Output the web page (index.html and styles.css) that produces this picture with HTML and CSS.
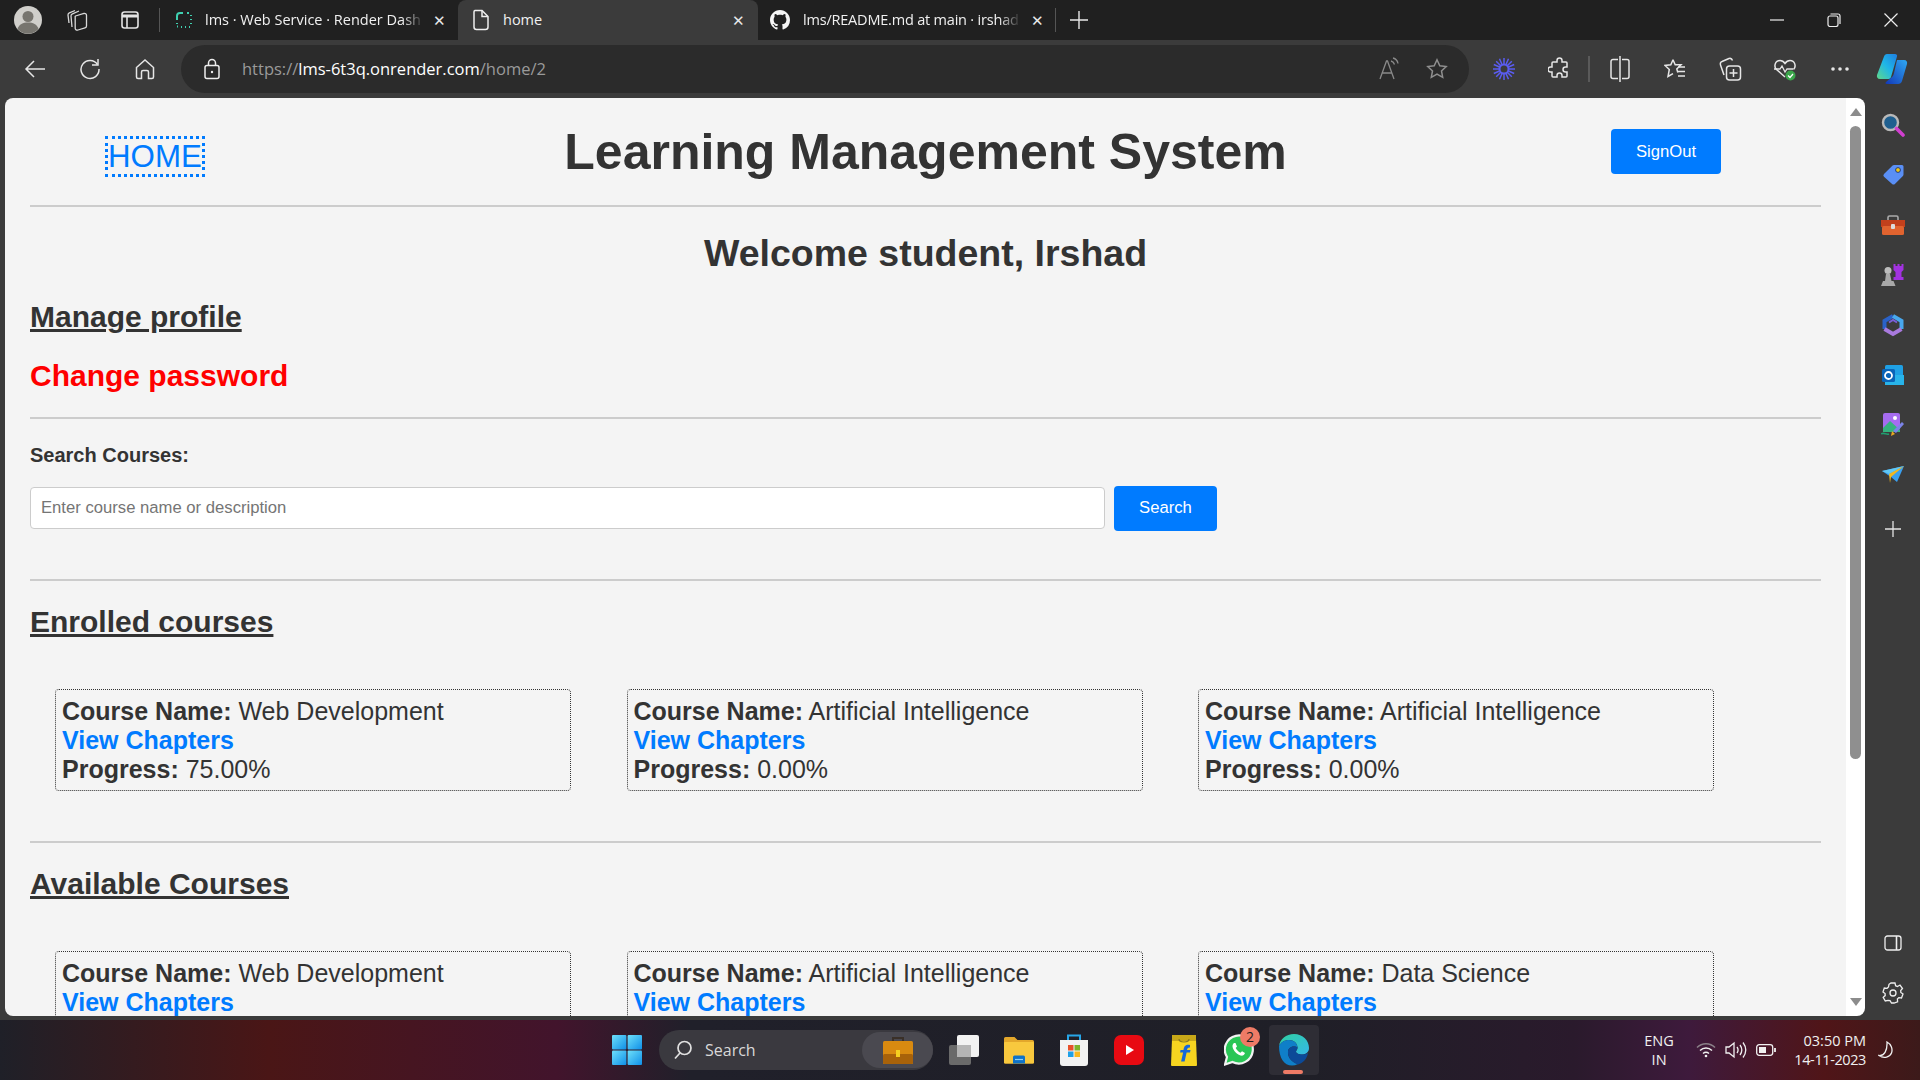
FILE: index.html
```html
<!DOCTYPE html>
<html lang="en">
  <head>
    <meta charset="UTF-8" />
    <meta name="viewport" content="width=device-width, initial-scale=1.0" />
    <title>home</title>
    <link rel="stylesheet" href="styles.css">
  </head>
  <body>
    <div class="tab-strip">
      <div class="strip-btn avatar-btn">
        <svg width="28" height="28" viewBox="0 0 28 28"><circle cx="14" cy="14" r="14" fill="#d0cfcb"/><circle cx="14" cy="10.500" r="5.500" fill="#77756f"/><path d="M3.500 23c1.500-5 5.500-6.500 10.500-6.500S23 18 24.500 23a14 14 0 0 1-21 0z" fill="#77756f"/></svg>
      </div>
      <div class="strip-btn">
        <svg width="24" height="24" viewBox="0 0 24 24" fill="none" stroke="#d8d8d8" stroke-width="1.300"><path d="m10.500 8 8.500-2.500a2 2 0 0 1 2.500 1.800V18a2 2 0 0 1-1.500 1.900L13 22a2 2 0 0 1-2.800-1.800V9.500a1.500 1.500 0 0 1 .3-1.500z"/><path d="M7 19 6 8c0-1 .5-1.800 1.500-2.200L14 3"/><path d="M4 15 3 7c0-1 .5-1.700 1.400-2.100L10 2.500"/></svg>
      </div>
      <div class="strip-btn">
        <svg width="20" height="20" viewBox="0 0 20 20" fill="none" stroke="#e4e4e4" stroke-width="1.600"><rect x="2" y="2" width="16" height="16" rx="2.500"/><path d="M2 6h16" stroke-width="3"/><path d="M7 6v12"/></svg>
      </div>
      <span class="strip-sep"></span>
      <div class="tab tab-first">
        <svg class="tab-icon" width="16" height="16" viewBox="0 0 16 16" fill="none" stroke="#3fd0b0" stroke-width="2"><path d="M1 8V4a3 3 0 0 1 3-3h3"/><path d="M1 11v1M1 14.500h1M5 15h1M9 15h1M13 15h1M15 11v1M15 7v1M15 3v1M11 1h2"/></svg>
        <span class="tab-title">lms · Web Service · Render Dash</span>
        <span class="tab-close">&#10005;</span>
      </div>
      <div class="tab tab-active">
        <svg class="tab-icon" width="18" height="22" viewBox="0 0 18 22" fill="none" stroke="#eee" stroke-width="1.500"><path d="M3 1.500h7l6 6V18a2.500 2.500 0 0 1-2.500 2.500h-9A2.500 2.500 0 0 1 2 18V3a1.500 1.500 0 0 1 1-1.500z"/><path d="M10 1.500V7.500h6"/></svg>
        <span class="tab-title">home</span>
        <span class="tab-close">&#10005;</span>
      </div>
      <div class="tab tab-github">
        <svg class="tab-icon" width="20" height="20" viewBox="0 0 16 16" fill="#f5f5f5"><path d="M8 0C3.580 0 0 3.580 0 8c0 3.540 2.290 6.530 5.470 7.590.4.070.55-.17.55-.38 0-.19-.01-.82-.01-1.490-2.010.37-2.530-.49-2.690-.94-.09-.23-.48-.94-.82-1.130-.28-.15-.68-.52-.01-.53.63-.01 1.080.58 1.230.82.720 1.210 1.870.87 2.330.66.070-.52.280-.87.510-1.070-1.780-.2-3.640-.89-3.640-3.950 0-.87.310-1.590.820-2.150-.08-.2-.36-1.020.080-2.120 0 0 .67-.21 2.200.82.640-.18 1.320-.27 2-.27s1.360.09 2 .27c1.530-1.040 2.200-.82 2.200-.82.440 1.100.160 1.920.080 2.120.510.560.820 1.270.820 2.150 0 3.070-1.870 3.750-3.650 3.950.290.250.540.730.540 1.480 0 1.070-.01 1.930-.01 2.200 0 .21.150.460.550.380A8.010 8.010 0 0 0 16 8c0-4.420-3.580-8-8-8z"/></svg>
        <span class="tab-title">lms/README.md at main · irshad</span>
        <span class="tab-close">&#10005;</span>
      </div>
      <span class="strip-sep strip-sep-end"></span>
      <div class="new-tab">
        <svg width="18" height="18" viewBox="0 0 18 18" stroke="#e8e8e8" stroke-width="1.400"><path d="M9 0v18M0 9h18"/></svg>
      </div>
      <div class="window-controls">
        <svg width="14" height="14" viewBox="0 0 14 14" stroke="#eee" stroke-width="1.200"><path d="M0 7h14"/></svg>
        <svg width="14" height="14" viewBox="0 0 14 14" fill="none" stroke="#eee" stroke-width="1.200"><rect x="1" y="3" width="10" height="10.500" rx="2"/><path d="M3.500 1h7.500a2 2 0 0 1 2 2v8"/></svg>
        <svg width="14" height="14" viewBox="0 0 14 14" stroke="#eee" stroke-width="1.200"><path d="M0.500 0.500l13 13M13.500 0.500l-13 13"/></svg>
      </div>
    </div>

    <div class="toolbar">
      <div class="tool-btn">
        <svg width="22" height="20" viewBox="0 0 22 20" fill="none" stroke="#e6e6e6" stroke-width="1.500"><path d="M21 10H2M10 2l-8 8 8 8"/></svg>
      </div>
      <div class="tool-btn">
        <svg width="22" height="22" viewBox="0 0 22 22" fill="none" stroke="#e6e6e6" stroke-width="1.500"><path d="M18.500 6.500A9 9 0 1 0 20 11"/><path d="M19 1v6h-6"/></svg>
      </div>
      <div class="tool-btn">
        <svg width="20" height="22" viewBox="0 0 20 22" fill="none" stroke="#e6e6e6" stroke-width="1.500"><path d="M1.500 9.500 10 2l8.500 7.500V19a1.500 1.500 0 0 1-1.500 1.500h-3.500V14a1.500 1.500 0 0 0-1.500-1.500H8A1.500 1.500 0 0 0 6.500 14v6.500H3A1.500 1.500 0 0 1 1.500 19z"/></svg>
      </div>
      <div class="address-bar">
        <svg class="lock" width="16" height="22" viewBox="0 0 16 22" fill="none" stroke="#eee" stroke-width="1.500"><rect x="1" y="7.500" width="14" height="13" rx="2"/><path d="M4.500 7.500V5a3.500 3.500 0 0 1 7 0v2.500"/><circle cx="8" cy="14" r="1.200" fill="#eee" stroke="none"/></svg>
        <span class="url"><span class="url-dim">https://</span>lms-6t3q.onrender.com<span class="url-dim">/home/2</span></span>
        <svg class="addr-icon read-icon" width="24" height="24" viewBox="0 0 24 24" fill="none" stroke="#8a8a8a" stroke-width="1.300"><path d="M2 22 8.500 4h1L16 22M4.500 16h9"/><path d="M13 4c2 .5 3 1.500 3.500 3.500M15 1c3 .8 4.500 2.500 5 5.500"/></svg>
        <svg class="addr-icon" width="22" height="22" viewBox="0 0 22 22" fill="none" stroke="#8f8f8f" stroke-width="1.500"><path d="m11 1.800 2.800 6 6.400.8-4.700 4.400 1.200 6.400-5.700-3.200-5.700 3.200 1.200-6.400L1.800 8.600l6.400-.8z"/></svg>
      </div>
      <div class="tool-btn">
        <svg width="22" height="22" viewBox="0 0 22 22" stroke="#5a5cf0" stroke-width="1.500"><path d="M11 0v22M0 11h22M3.200 3.200l15.600 15.600M18.800 3.200 3.200 18.800M6.500 .8l9 20.400M15.500 .8l-9 20.400M.8 6.500l20.400 9M.8 15.500l20.400-9"/><circle cx="11" cy="11" r="4.500" fill="#3b3b3b" stroke-width="2"/></svg>
      </div>
      <div class="tool-btn">
        <svg width="22" height="24" viewBox="0 0 22 24" fill="none" stroke="#e6e6e6" stroke-width="1.500"><path d="M9 3.500a2.500 2.500 0 0 1 5 0V5h4a1 1 0 0 1 1 1v4h-1.500a2.500 2.500 0 0 0 0 5H19v4a1 1 0 0 1-1 1h-4v-1.500a2.500 2.500 0 0 0-5 0V20H5a1 1 0 0 1-1-1v-4H2.500a2.500 2.500 0 0 1 0-5H4V6a1 1 0 0 1 1-1h4z"/></svg>
      </div>
      <span class="tool-sep"></span>
      <div class="tool-btn">
        <svg width="20" height="26" viewBox="0 0 20 26" fill="none" stroke="#e6e6e6" stroke-width="1.500"><path d="M8 3.500H3A2 2 0 0 0 1 5.500v15a2 2 0 0 0 2 2h5M12 3.500h5a2 2 0 0 1 2 2v15a2 2 0 0 1-2 2h-5"/><path d="M10 0v26"/></svg>
      </div>
      <div class="tool-btn">
        <svg width="22" height="22" viewBox="0 0 22 22" fill="none" stroke="#e6e6e6" stroke-width="1.500"><path d="m9 1.800 2.200 5H17L12.800 11l1 3.500M9 1.800l-2.200 5-5.800.7 4.300 4L4 18.500l5-2.800"/><path d="M14 9h7M14 13.500h7M14 18h7"/></svg>
      </div>
      <div class="tool-btn">
        <svg width="24" height="26" viewBox="0 0 24 26" fill="none" stroke="#e6e6e6" stroke-width="1.500"><path d="M6 19 2.500 9C2 7.500 2.500 6 4 5.500l7-3c1.500-.5 3 .5 3.500 2"/><rect x="8.500" y="10" width="14" height="14" rx="3"/><path d="M15.500 13v8M11.500 17h8"/></svg>
      </div>
      <div class="tool-btn">
        <svg width="24" height="24" viewBox="0 0 24 24"><path d="M12 20 3.500 12.500C.5 9.500 2 3.500 7 3.500c2.500 0 4 1.500 5 3 1-1.500 2.500-3 5-3 5 0 6.500 6 3.500 9" fill="none" stroke="#e6e6e6" stroke-width="1.500"/><path d="M1 12h6l2-3 3 6 2-3h6" fill="none" stroke="#e6e6e6" stroke-width="1.300"/><circle cx="17.500" cy="18.500" r="5" fill="#3aa54a"/><path d="m15 18.500 2 2 3-3.500" fill="none" stroke="#fff" stroke-width="1.200"/></svg>
      </div>
      <div class="tool-btn">
        <svg width="18" height="4" viewBox="0 0 18 4" fill="#e6e6e6"><circle cx="2" cy="2" r="1.800"/><circle cx="9" cy="2" r="1.800"/><circle cx="16" cy="2" r="1.800"/></svg>
      </div>
      <div class="tool-btn tool-copilot">
        <svg width="32" height="32" viewBox="0 0 32 32"><defs><linearGradient id="copA" x1="0" y1="1" x2="1" y2="0"><stop offset="0" stop-color="#5fd88a"/><stop offset=".5" stop-color="#1fb6e8"/><stop offset="1" stop-color="#1f7de0"/></linearGradient><linearGradient id="copB" x1="0" y1="1" x2="1" y2="0"><stop offset="0" stop-color="#1238b8"/><stop offset="1" stop-color="#2fa8f2"/></linearGradient></defs><path d="M11 1h8c1.500 0 2.500 1 2 2.500L15 24c-.5 1.500-1.500 2-3 2H4c-2.500 0-3.500-2-3-4L8 3.500C8.500 2 9.500 1 11 1z" fill="url(#copA)"/><path d="M21 7h7c2.500 0 3.500 2 3 4l-5 17c-.5 2-2 3-4 3H11c-1.500 0-2-1-1-2l6-5c1-1 1.500-2 2-4z" fill="url(#copB)"/></svg>
      </div>
    </div>

    <div class="window-body">
      <main class="page">
        <header class="site-header">
          <a class="home-link">HOME</a>
          <h1 class="site-title">Learning Management System</h1>
          <button class="btn signout-btn">SignOut</button>
        </header>
        <hr />
        <h2 class="welcome">Welcome student, Irshad</h2>
        <h3 class="section-title profile-link">Manage profile</h3>
        <h3 class="password-link">Change password</h3>
        <hr class="after-profile" />
        <form class="search-form">
          <label class="search-label" for="courseSearch">Search Courses:</label>
          <div class="search-row">
            <input type="text" id="courseSearch" class="search-input" placeholder="Enter course name or description" />
            <button type="button" class="btn search-btn">Search</button>
          </div>
        </form>
        <hr />
        <h3 class="section-title">Enrolled courses</h3>
        <div class="course-grid">
          <div class="course-card">
            <div><b>Course Name:</b> Web Development</div>
            <a class="chapters-link">View Chapters</a>
            <div><b>Progress:</b> 75.00%</div>
          </div>
          <div class="course-card">
            <div><b>Course Name:</b> Artificial Intelligence</div>
            <a class="chapters-link">View Chapters</a>
            <div><b>Progress:</b> 0.00%</div>
          </div>
          <div class="course-card">
            <div><b>Course Name:</b> Artificial Intelligence</div>
            <a class="chapters-link">View Chapters</a>
            <div><b>Progress:</b> 0.00%</div>
          </div>
        </div>
        <hr />
        <h3 class="section-title">Available Courses</h3>
        <div class="course-grid">
          <div class="course-card">
            <div><b>Course Name:</b> Web Development</div>
            <a class="chapters-link">View Chapters</a>
          </div>
          <div class="course-card">
            <div><b>Course Name:</b> Artificial Intelligence</div>
            <a class="chapters-link">View Chapters</a>
          </div>
          <div class="course-card">
            <div><b>Course Name:</b> Data Science</div>
            <a class="chapters-link">View Chapters</a>
          </div>
        </div>
      </main>

      <div class="scrollbar">
        <span class="arrow-up"></span>
        <span class="scroll-thumb"></span>
        <span class="arrow-down"></span>
      </div>

      <aside class="sidebar">
        <svg class="side-icon" width="24" height="24" viewBox="0 0 24 24"><circle cx="9.500" cy="9.500" r="7.500" fill="#1f5f8f" stroke="#b9b9b9" stroke-width="2.400"/><path d="m15.500 15.500 6.500 6.500" stroke="#d13fd0" stroke-width="3.600" stroke-linecap="round"/></svg>
        <svg class="side-icon" width="22" height="22" viewBox="0 0 22 22"><path d="M12 1h8a1.500 1.500 0 0 1 1.500 1.500v8a2 2 0 0 1-.6 1.400l-8 8a2 2 0 0 1-2.800 0L2 12.800a2 2 0 0 1 0-2.800l8.600-8.400A2 2 0 0 1 12 1z" fill="#5a8ff5"/><circle cx="16" cy="6" r="2.400" fill="#f2c811" stroke="#1f3a80"/></svg>
        <svg class="side-icon" width="24" height="20" viewBox="0 0 24 20"><path d="M7 5V2.500A1.500 1.500 0 0 1 8.500 1h7A1.500 1.500 0 0 1 17 2.500V5" fill="none" stroke="#aaa" stroke-width="1.600"/><rect y="5" width="24" height="7" fill="#c2401c"/><rect x="1" y="11" width="22" height="9" rx="1.500" fill="#e0632f"/><rect x="10" y="9" width="4" height="5" rx="1" fill="#ddd"/></svg>
        <svg class="side-icon" width="24" height="24" viewBox="0 0 24 24"><path d="M13.500 1h2v2h2V1h2v2h2V1h2v6l-2 2v5h2v3H13.500v-3h2V9l-2-2z" fill="#a232e0" transform="translate(-1 0)"/><circle cx="7" cy="7.500" r="3.500" fill="#bdbdbd"/><path d="M5 11h4l1.500 7h2l2 5H0l2-5h2z" fill="#a8a8a8"/></svg>
        <svg class="side-icon" width="22" height="24" viewBox="0 0 22 24" fill="none" stroke-width="4"><path d="M2.500 16V8L11 3" stroke="#2a62c8"/><path d="M11 3l8.500 5v8" stroke="#48a8ee"/><path d="M19.500 16 11 21l-8.500-5" stroke="#a97ade"/><path d="M7 9.500 11 7l4 2.500" stroke="#7a5fd8" stroke-width="2"/></svg>
        <svg class="side-icon" width="22" height="22" viewBox="0 0 22 22"><rect x="3" y="1" width="18" height="20" rx="1.500" fill="#1fa0e4"/><path d="M3 11h19v10H3z" fill="#28b4ea"/><rect y="5" width="13" height="13" rx="1.500" fill="#0a64b8"/><circle cx="6.500" cy="11.500" r="3.500" fill="none" stroke="#fff" stroke-width="1.800"/></svg>
        <svg class="side-icon" width="24" height="24" viewBox="0 0 24 24"><rect x="2" y="0" width="17" height="17" rx="2" fill="#a66cf0"/><path d="M2 15 9 8l10 9v2H2z" fill="#35b37e"/><circle cx="14" cy="5" r="2" fill="#fff"/><path d="m12 18 9-9 2 2-8 9z" fill="#7b83e8"/><path d="m11 18 3 3-4 2z" fill="#e8a820"/><path d="M0 21c3-2 5 1 8 0" fill="none" stroke="#1fa070" stroke-width="1.500"/></svg>
        <svg class="side-icon" width="22" height="18" viewBox="0 0 22 18"><path d="M0 5 22 0 15 16 9 11z" fill="#3aa0f0"/><path d="M0 5 22 0 7 8z" fill="#60c8f5"/><path d="M7 8 22 0 9 11l-1 6z" fill="#f2b820"/></svg>
        <svg class="side-icon side-plus" width="16" height="16" viewBox="0 0 16 16" stroke="#e4e4e4" stroke-width="1.300"><path d="M8 0v16M0 8h16"/></svg>
        <span class="side-rule"></span>
        <svg class="side-icon" width="18" height="16" viewBox="0 0 18 16" fill="none" stroke="#eee" stroke-width="1.300"><rect x="1" y="1" width="16" height="14" rx="2.500"/><path d="M12.500 1v14" stroke-width="1.600"/></svg>
        <svg class="side-icon" width="22" height="22" viewBox="0 0 22 22" fill="none" stroke="#eee" stroke-width="1.300"><path d="M9 1h4l.6 2.700 1.800.8L18 3l2.500 3.500-1.800 2 .1 2 2.200 1.500-1.500 4-2.700-.4-1.400 1.400.2 2.800L12 21h-2.500l-1.500-2.300-2-.3L3.300 19 1.200 15.300l2-1.700-.1-2L1 10l1.300-4 2.800.3L6.500 5 7 2.300z"/><circle cx="11" cy="11" r="3"/></svg>
      </aside>
    </div>

    <footer class="taskbar">
      <svg class="win-logo" width="30" height="30" viewBox="0 0 30 30"><defs><linearGradient id="winA" x1="0" y1="0" x2="1" y2="1"><stop offset="0" stop-color="#6ee0fa"/><stop offset="1" stop-color="#0f8fe8"/></linearGradient></defs><rect width="14.400" height="14.400" rx="1" fill="url(#winA)"/><rect x="15.600" width="14.400" height="14.400" rx="1" fill="url(#winA)"/><rect y="15.600" width="14.400" height="14.400" rx="1" fill="url(#winA)"/><rect x="15.600" y="15.600" width="14.400" height="14.400" rx="1" fill="url(#winA)"/></svg>
      <div class="task-search">
        <svg width="20" height="20" viewBox="0 0 20 20" fill="none" stroke="#e0e0e0" stroke-width="1.700"><circle cx="11.500" cy="8" r="6.500"/><path d="M7 13l-5 5.500"/></svg>
        <span class="task-search-text">Search</span>
        <span class="task-search-pic">
          <svg width="30" height="28" viewBox="0 0 30 28"><path d="M10 6V2h10v4" fill="none" stroke="#3a3028" stroke-width="2"/><rect y="5" width="30" height="23" rx="1.500" fill="#d98a10"/><rect y="18" width="30" height="10" rx="1.500" fill="#a8620a"/><rect x="13" y="14" width="4" height="7" fill="#f5d020"/></svg>
        </span>
      </div>
      <div class="task-apps">
        <span class="task-app"><svg width="30" height="30" viewBox="0 0 30 30"><rect x="0" y="10" width="22" height="20" rx="2" fill="#6a6a6a"/><rect x="8" y="0" width="22" height="22" rx="2" fill="#f2f2f2"/><rect x="8" y="10" width="14" height="12" fill="#b5b5b5"/></svg></span>
        <span class="task-app"><svg width="30" height="28" viewBox="0 0 30 28"><path d="M0 2.500A1.500 1.500 0 0 1 1.500 1h9l3 3h15A1.500 1.500 0 0 1 30 5.500V26a1.500 1.500 0 0 1-1.500 1.500h-27A1.500 1.500 0 0 1 0 26z" fill="#e3a72b"/><rect y="6" width="30" height="21.500" rx="1" fill="#f8c83e"/><path d="M9 27.500V21a1.500 1.500 0 0 1 1.500-1.500h9A1.500 1.500 0 0 1 21 21v6.500z" fill="#0f72c8"/><path d="M11 23.500h8" stroke="#8fd0f5" stroke-width="1.200"/></svg></span>
        <span class="task-app"><svg width="28" height="32" viewBox="0 0 28 32"><path d="M8 8V1.500h12V8" fill="none" stroke="#27a6e8" stroke-width="2"/><path d="M0 6h28v23a3 3 0 0 1-3 3H3a3 3 0 0 1-3-3z" fill="#f2f2f2"/><rect x="8" y="11" width="5.500" height="5.500" fill="#e8502a"/><rect x="14.500" y="11" width="5.500" height="5.500" fill="#7db32a"/><rect x="8" y="17.500" width="5.500" height="5.500" fill="#1fa0e8"/><rect x="14.500" y="17.500" width="5.500" height="5.500" fill="#f8b820"/></svg></span>
        <span class="task-app"><svg width="30" height="30" viewBox="0 0 30 30"><rect width="30" height="30" rx="7" fill="#e80a12"/><path d="m12 10 8 5-8 5z" fill="#fff"/></svg></span>
        <span class="task-app"><svg width="26" height="32" viewBox="0 0 26 32"><path d="M1 5h24l1 26a1 1 0 0 1-1 1H1a1 1 0 0 1-1-1z" fill="#f6d420"/><path d="M1 1h24v6H1z" fill="#c8a818"/><path d="M8 5c0 4 10 4 10 0" fill="none" stroke="#8a7a20" stroke-width="1.200"/><path d="M19 11c-5-1-6 2-6.500 5H9.500l-.4 2.500h3l-2 9h3.500l2-9h3.400l.5-2.500H16c.3-2 1-2.800 3-2.500z" fill="#1668d8"/></svg></span>
        <span class="task-app task-whatsapp">
          <svg width="30" height="32" viewBox="0 0 30 32"><path d="M1 30.500 3 23A14 14 0 1 1 8.500 28z" fill="#29c656" stroke="#f2f2f2" stroke-width="2.200"/><path d="M10 9c-1.500 1-2 3-1 5.500 1.500 3.500 4.500 6 7.500 7 2 .6 4-.5 4.500-2.500l-3-1.800-1.500 1.500c-2-.8-3.700-2.500-4.800-4.700l1.300-1.500L11.500 9z" fill="#fff"/></svg>
          <span class="badge">2</span>
        </span>
        <span class="task-app task-edge">
          <svg width="30" height="32" viewBox="0 0 30 32"><defs><linearGradient id="edgeA" x1="0" y1="0" x2="1" y2="1"><stop offset="0" stop-color="#2fd0a0"/><stop offset="1" stop-color="#35b8e8"/></linearGradient></defs><path d="M15 0C24 0 30 6.500 30 14c0 4-3 6.500-7 6.500-3 0-6-1-6-3 0-1 1.500-1.500 1.500-4C18.500 9 14.500 6 10 6 6 6 2 8 0 12 1 5 7 0 15 0z" fill="url(#edgeA)"/><path d="M0 12c2-4 6-6 10-6 4.500 0 8.500 3 8.500 7.500-2.500-2-9-1.500-9.500 4-.5 5 3 10.500 10 12.500-2 1-4 1.500-6 1.500C5 31.500 0 24 0 12z" fill="#0f7fc8"/><path d="M9 17.500c.5-5.500 7-6 9.500-4 0 2.500-1.500 3-1.500 4 0 2 3 3 6 3 2 0 4-.5 6-1.500-1 6-5 10-10 11.500C12 28 8.500 22.500 9 17.500z" fill="#0c4a98"/></svg>
          <span class="active-dash"></span>
        </span>
      </div>
      <div class="tray">
        <div class="tray-lang"><span>ENG</span><span>IN</span></div>
        <svg class="tray-icon" width="20" height="16" viewBox="0 0 20 16" fill="none" stroke="#f0f0f0" stroke-width="1.500"><path d="M1 5.500c5-5 13-5 18 0" stroke="#8a8088"/><path d="M4 8.500c3.500-3.200 8.500-3.200 12 0M7 11.500c1.800-1.500 4.200-1.500 6 0"/><circle cx="10" cy="14" r="1.300" fill="#f0f0f0" stroke="none"/></svg>
        <svg class="tray-icon" width="22" height="18" viewBox="0 0 22 18" fill="none" stroke="#f0f0f0" stroke-width="1.300"><path d="M1 6v6h3l5 4V2L4 6z"/><path d="M12 6c1.300 1.800 1.300 4.200 0 6M15 4c2.200 3 2.200 7 0 10M18 1.500c3.400 4.600 3.400 10.400 0 15"/></svg>
        <svg class="tray-icon" width="20" height="12" viewBox="0 0 20 12" fill="none" stroke="#f0f0f0" stroke-width="1.300"><rect x=".7" y=".7" width="16" height="10.600" rx="2.500"/><rect x="3" y="3" width="7" height="6" fill="#f0f0f0" stroke="none"/><path d="M19 4v4" stroke-width="1.800"/></svg>
        <div class="tray-clock"><span>03:50 PM</span><span class="tray-date">14-11-2023</span></div>
        <svg class="tray-moon" width="16" height="18" viewBox="0 0 16 18" fill="none" stroke="#f0f0f0" stroke-width="1.300"><path d="M9 1c4 2 6 7 4.500 11S6 18 1 14.500C6 15 9.500 10 9 1z"/></svg>
      </div>
    </footer>
  </body>
</html>
```

FILE: styles.css
```css
* {
  box-sizing: border-box;
}
html,
body {
  height: 100%;
}
body {
  margin: 0;
  display: flex;
  flex-direction: column;
  overflow: hidden;
  background-color: #3b3b3b;
  font-family: "Liberation Sans", Arial, sans-serif;
  color: #333333;
}

/* browser tab strip */
.tab-strip {
  display: flex;
  align-items: center;
  height: 40px;
  flex: none;
  background-color: #202020;
  color: #f0f0f0;
  font-family: "Open Sans", sans-serif;
  font-size: 14.500px;
}
.strip-btn {
  display: flex;
  justify-content: center;
  align-items: center;
  width: 53px;
  height: 40px;
}
.avatar-btn {
  width: 50px;
  padding-left: 6px;
}
.strip-sep {
  width: 1px;
  height: 24px;
  margin: 0 3px;
  background-color: #555555;
}
.strip-sep-end {
  margin: 0;
}
.tab {
  display: flex;
  align-items: center;
  height: 40px;
  flex: none;
}
.tab-first {
  width: 295px;
  padding-left: 13px;
}
.tab-active {
  width: 300px;
  padding-left: 14px;
  border-radius: 8px 8px 0 0;
  background-color: #3b3b3b;
}
.tab-github {
  width: 297px;
  padding-left: 12px;
}
.tab-icon {
  flex: none;
}
.tab-title {
  flex: 1;
  min-width: 0;
  margin: 0 0 2px 13px;
  overflow: hidden;
  white-space: nowrap;
  -webkit-mask-image: linear-gradient(to left, transparent 0, #000 22px);
  mask-image: linear-gradient(to left, transparent 0, #000 22px);
}
.tab-active .tab-title {
  -webkit-mask-image: none;
  mask-image: none;
}
.tab-github .tab-title {
  letter-spacing: -0.200px;
}
.tab-close {
  width: 34px;
  flex: none;
  padding-right: 6px;
  font-size: 15px;
  text-align: center;
  color: #e8e8e8;
}
.tab-first .tab-close {
  padding-right: 3px;
}
.tab-github .tab-close {
  padding-right: 1px;
}
.new-tab {
  display: flex;
  justify-content: center;
  width: 46px;
}
.window-controls {
  display: flex;
  align-items: center;
  gap: 43px;
  margin-left: auto;
  padding-right: 22px;
}

/* toolbar */
.toolbar {
  display: flex;
  align-items: center;
  flex: none;
  height: 58px;
  padding-left: 7px;
  background-color: #3b3b3b;
}
.tool-btn {
  display: flex;
  justify-content: center;
  align-items: center;
  width: 55px;
  height: 48px;
  flex: none;
}
.tool-copilot {
  width: 50px;
}
.tool-sep {
  width: 2px;
  height: 26px;
  margin: 0 2px;
  background-color: #5a5a5a;
}
.address-bar {
  display: flex;
  align-items: center;
  width: 1288px;
  height: 48px;
  margin: 0 7px 0 9px;
  padding: 0 21px 0 23px;
  border-radius: 24px;
  background-color: #2b2b2b;
}
.lock {
  flex: none;
}
.url {
  flex: 1;
  margin: 0 0 2px 22px;
  font-family: "Open Sans", sans-serif;
  font-size: 16.500px;
  color: #ffffff;
}
.url-dim {
  color: #9a9a9a;
}
.addr-icon {
  flex: none;
}
.read-icon {
  margin-right: 24px;
}

/* browser window */
.window-body {
  display: flex;
  height: 918px;
  flex: none;
}
.page {
  flex: 1;
  min-width: 0;
  margin-left: 5px;
  padding: 0 25px;
  overflow: hidden;
  border-radius: 8px 0 0 8px;
  background-color: #f4f4f4;
}
.scrollbar {
  display: flex;
  flex-direction: column;
  align-items: center;
  width: 19px;
  flex: none;
  padding-top: 10px;
  border-radius: 0 8px 8px 0;
  background-color: #ffffff;
}
.arrow-up,
.arrow-down {
  width: 0;
  height: 0;
  border-left: 6px solid transparent;
  border-right: 6px solid transparent;
}
.arrow-up {
  border-bottom: 8px solid #8c8c8c;
}
.arrow-down {
  margin-top: 239px;
  border-top: 8px solid #8c8c8c;
}
.scroll-thumb {
  width: 11px;
  height: 633px;
  margin-top: 10px;
  border-radius: 6px;
  background-color: #8f8f8f;
}
.sidebar {
  display: flex;
  flex-direction: column;
  align-items: center;
  width: 55px;
  flex: none;
  padding-top: 15px;
}
.side-icon {
  flex: none;
  height: 24px;
  margin-bottom: 26px;
}
.side-plus {
  margin: 4px 0 0;
}
.side-rule {
  width: 35px;
  height: 2px;
  margin: 375px 0 15px;
  background-color: #666666;
}

/* page content */
hr {
  height: 2px;
  margin: 0;
  border: none;
  background-color: #cccccc;
}
.site-header {
  display: grid;
  grid-template-columns: 1fr auto 1fr;
  align-items: center;
  height: 107px;
}
.home-link {
  justify-self: start;
  margin: 10px 0 0 75px;
  padding: 0;
  border: 3px dotted #007bff;
  font-size: 31.250px;
  line-height: 35px;
  color: #007bff;
}
.site-title {
  margin: 0;
  font-size: 50px;
  line-height: 58px;
  color: #333333;
}
.btn {
  border: none;
  border-radius: 4px;
  background-color: #007bff;
  color: #ffffff;
  font-family: "Liberation Sans", Arial, sans-serif;
  font-size: 16.670px;
}
.signout-btn {
  justify-self: end;
  width: 110px;
  height: 45px;
  margin-right: 100px;
}
.welcome {
  margin: 24px 0 0;
  font-size: 37.500px;
  line-height: 44px;
  text-align: center;
}
.section-title {
  margin: 0;
  font-size: 30px;
  line-height: 38px;
  text-decoration: underline;
}
.welcome + .profile-link {
  margin-top: 23px;
}
.password-link {
  margin: 21px 0 0;
  font-size: 30px;
  line-height: 38px;
  color: #ff0000;
}
.after-profile {
  margin-top: 22px;
}
.search-form {
  display: flex;
  flex-direction: column;
  height: 160px;
  padding-top: 24px;
}
.search-label {
  font-size: 20px;
  font-weight: bold;
  line-height: 24px;
}
.search-row {
  display: flex;
  align-items: center;
  gap: 9px;
  margin-top: 18px;
}
.search-input {
  width: 1075px;
  height: 42px;
  padding: 0 10px;
  border: 1px solid #cccccc;
  border-radius: 4px;
  background-color: #ffffff;
  font-family: "Liberation Sans", Arial, sans-serif;
  font-size: 16.670px;
}
.search-input::placeholder {
  color: #757575;
}
.search-btn {
  width: 103px;
  height: 45px;
  margin-top: 1px;
  padding-bottom: 3px;
}
hr + .section-title {
  margin-top: 22px;
}
.course-grid {
  display: grid;
  grid-template-columns: repeat(3, 516px);
  column-gap: 55.500px;
  margin: 48px 0 50px;
  padding-left: 25px;
}
.course-card {
  height: 102px;
  padding: 7px 6px;
  border: 1px dotted #333333;
  border-radius: 4px;
  font-size: 25px;
  line-height: 29px;
}
.chapters-link {
  display: block;
  font-weight: bold;
  color: #007bff;
}

/* windows taskbar */
.taskbar {
  display: flex;
  align-items: center;
  height: 60px;
  flex: none;
  margin-top: 4px;
  padding-left: 612px;
  background: linear-gradient(90deg, #1f2028 0, #4a1616 14%, #42142c 29%, #20202a 36%, #1f1f27 68%, #2a1a2c 82%, #3e1a3c 88%, #501518 95%, #3c1a1a 100%);
  color: #f0f0f0;
  font-family: "Open Sans", sans-serif;
}
.win-logo {
  flex: none;
}
.task-search {
  display: flex;
  align-items: center;
  width: 274px;
  height: 40px;
  flex: none;
  margin-left: 17px;
  padding-left: 14px;
  border-radius: 20px;
  background-color: #3a393f;
}
.task-search-text {
  margin-left: 12px;
  font-size: 16px;
  color: #d8d8d8;
}
.task-search-pic {
  display: flex;
  justify-content: center;
  align-items: center;
  width: 71px;
  height: 36px;
  margin-left: auto;
  border-radius: 18px;
  background-color: #4a4950;
}
.task-apps {
  display: flex;
  align-items: center;
  margin-left: 3px;
}
.task-app {
  position: relative;
  display: flex;
  justify-content: center;
  align-items: center;
  width: 55px;
  height: 50px;
  flex: none;
}
.badge {
  position: absolute;
  top: 2px;
  right: 6px;
  width: 20px;
  height: 20px;
  border-radius: 50%;
  background-color: #ee7b66;
  font-size: 14px;
  line-height: 20px;
  text-align: center;
  color: #222222;
}
.task-edge {
  width: 50px;
  margin-left: 3px;
  border-radius: 4px;
  background-color: #2e2d35;
}
.active-dash {
  position: absolute;
  left: 14px;
  bottom: 1px;
  width: 20px;
  height: 4px;
  border-radius: 2px;
  background-color: #ee7b66;
}
.tray {
  display: flex;
  align-items: center;
  margin-left: auto;
  padding-right: 26.500px;
  font-size: 14.500px;
  line-height: 19px;
}
.tray-lang {
  display: flex;
  flex-direction: column;
  align-items: center;
  margin-right: 22.500px;
}
.tray-icon {
  flex: none;
  margin-right: 9px;
}
.tray-clock {
  display: flex;
  flex-direction: column;
  align-items: flex-end;
  margin-left: 9px;
}
.tray-date {
  letter-spacing: -0.400px;
}
.tray-moon {
  flex: none;
  margin-left: 11.500px;
}
```
